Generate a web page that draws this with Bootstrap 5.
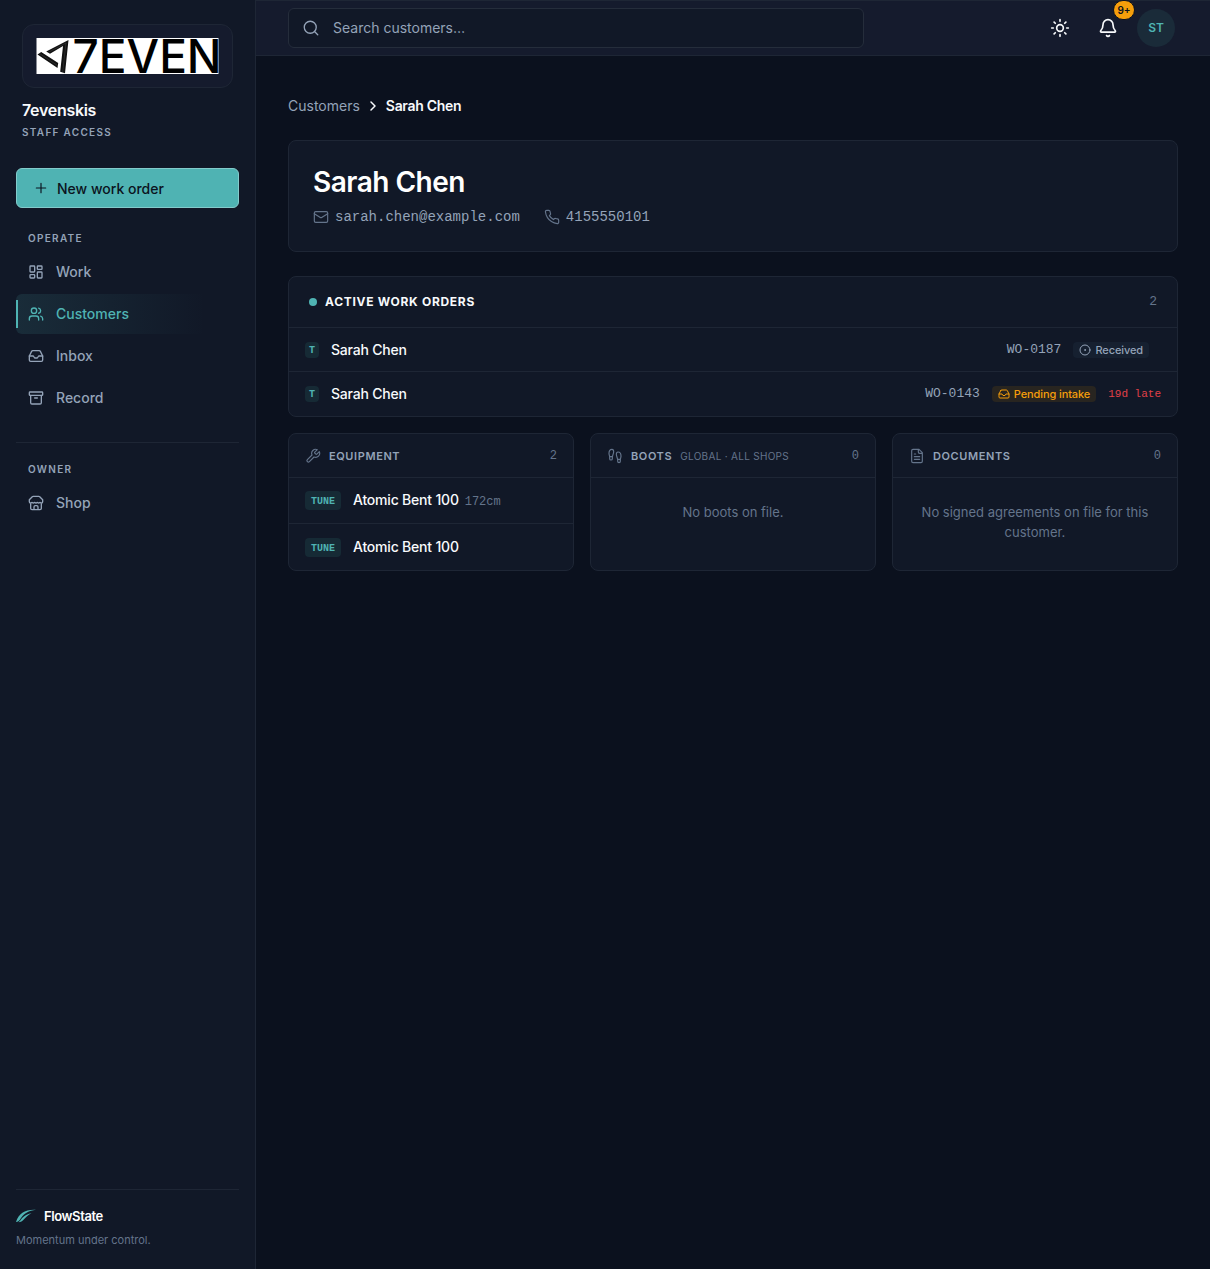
<!DOCTYPE html>
<html lang="en" data-bs-theme="dark">
<head>
<meta charset="utf-8">
<meta name="viewport" content="width=device-width, initial-scale=1">
<title>Sarah Chen · Customers · FlowState</title>
<link href="https://cdn.jsdelivr.net/npm/bootstrap@5.3.0/dist/css/bootstrap.min.css" rel="stylesheet">
<style>
:root{--page:#0b111e;--panel:#111827;--bar:#151b2d;--line:#1e2635;--teal:#4fb3b3;--soft:#94a3b8;--dim:#64748b;--bright:#f8fafc}
body{background:var(--page);color:var(--bright);font:14px/20px Inter,"Liberation Sans",sans-serif}
a{text-decoration:none}
svg{flex:none}
.ico{fill:none;stroke:currentColor;stroke-width:2;stroke-linecap:round;stroke-linejoin:round}
.thin{stroke-width:1.75}
.thick{stroke-width:3}
.mono{font-family:"Liberation Mono",monospace}
.soft{color:var(--soft)}
.dim{color:var(--dim)}
.side{width:256px;background:var(--panel);border-right:1px solid var(--line);padding:24px 16px 19px}
.brand{padding:0 6px;margin-bottom:28px}
.logo-box{background:var(--bar);border:1px solid var(--line);border-radius:12px;padding:13px;margin-bottom:12px;line-height:0}
.brand-name{font-size:16px;font-weight:600;line-height:20px;letter-spacing:-.3px}
.eyebrow{font-size:10px;font-weight:600;line-height:16px;letter-spacing:1.3px;color:var(--soft)}
.btn-new{--bs-btn-color:#0b1420;--bs-btn-bg:var(--teal);--bs-btn-border-color:#83cbcb;--bs-btn-hover-bg:#62c0c0;--bs-btn-hover-color:#0b1420;--bs-btn-hover-border-color:#9bd8d8;height:40px;font-size:14px;font-weight:500;padding:0 16px;border-radius:6px;margin-bottom:22px}
.side-nav{gap:2px}
.side-nav .nav-link{height:40px;padding:0 12px;gap:12px;font-weight:500;color:var(--soft);border-radius:6px;position:relative}
.side-nav .nav-link.active{color:var(--teal);background:linear-gradient(90deg,rgba(79,179,179,.13),rgba(79,179,179,0) 85%)}
.side-nav .nav-link.active::before{content:"";position:absolute;left:0;top:6px;bottom:6px;width:2px;background:var(--teal)}
.side-label{padding:0 12px;margin-bottom:6px}
.side-split{border-top:1px solid var(--line);margin-top:24px;padding-top:18px}
.side-foot{border-top:1px solid var(--line);padding-top:16px}
.foot-name{font-size:13px;font-weight:600;letter-spacing:-.4px;color:#fff}
.tagline{font-size:11px}
.topbar{height:56px;background:var(--bar);border-top:1px solid var(--line);border-bottom:1px solid var(--line);padding:0 34px 0 32px}
.find{width:576px;height:40px;background:var(--panel);border:1px solid #252d3b;border-radius:6px;padding:0 13px;gap:13px;color:var(--soft)}
.find input{background:none;border:0;outline:0;padding:0;font-size:14px;color:var(--bright)}
.find input::placeholder{color:var(--soft);opacity:1}
.bar-btn{width:40px;height:40px;padding:0;color:var(--bright)}
.alert-count{position:absolute;top:-8px;right:-7px;min-width:22px;height:20px;border:1px solid var(--page);border-radius:10px;background:#f59e0b;color:#0b111e;font-size:10px;font-weight:600;line-height:18px}
.avatar{width:40px;height:40px;background:#1a2b39;background-clip:padding-box;border:1px solid transparent;color:var(--teal);font-size:12px;font-weight:600}
.page{padding:40px 32px 32px}
.crumbs{margin-bottom:24px;gap:7px}
.crumbs .here{font-weight:600;letter-spacing:-.3px}
.panel{background:var(--panel);border:1px solid var(--line);border-radius:8px}
.person{padding:24px;margin-bottom:24px}
.person h1{font-size:28px;line-height:34px;font-weight:600;letter-spacing:-.5px;margin-bottom:8px}
.contact{font-size:14px;gap:6px}
.panel-head{padding:0 16px;height:44px;border-bottom:1px solid var(--line)}
.panel-head.tall{padding:0 20px;height:51px}
.panel-head h2{margin:0;font-size:11px;line-height:16px;font-weight:600;letter-spacing:.6px;color:var(--soft)}
.panel-head.tall h2{font-size:12px;font-weight:700;letter-spacing:.7px;color:var(--bright)}
.panel-head .mono{font-size:12px;color:var(--dim)}
.panel-head.tall .mono{font-size:13px}
.panel-head .scope{font-size:10px;letter-spacing:.3px;color:var(--dim)}
.dot{width:8px;height:8px;border-radius:50%;background:var(--teal)}
.rows{--bs-list-group-bg:transparent;--bs-list-group-border-color:var(--line);--bs-list-group-color:var(--bright);--bs-list-group-item-padding-x:16px;--bs-list-group-item-padding-y:0}
.rows .list-group-item{gap:12px;height:44px;font-weight:500;letter-spacing:-.2px}
.rows.gear .list-group-item{height:46px}
.order-no{font-size:13px;font-weight:400;letter-spacing:0;color:var(--soft)}
.tag{background:#162a35;color:var(--teal);font:700 10px/14px "Liberation Mono",monospace;letter-spacing:0;border-radius:4px;padding:2px 4px 0}
.tag.wide{padding:4px 6px 1px}
.state{gap:4px;height:16px;border-radius:4px;padding:0 6px;background:#162030;color:var(--soft);font-size:11px;line-height:16px;font-weight:500;letter-spacing:-.1px}
.state.last{margin-right:12px}
.state.wait{background:#282520;color:#f59e0b}
.late{font-size:11px;font-weight:400;letter-spacing:0;color:#e04048}
.size{font-size:12px;font-weight:400;letter-spacing:0;color:var(--dim);margin-left:6px}
.none{font-size:13px;padding:24px 16px 28px}
</style>
</head>
<body>
<div class="d-flex min-vh-100">
  <aside class="side d-flex flex-column flex-shrink-0 vh-100 sticky-top">
    <div class="brand">
      <div class="logo-box">
        <svg class="w-100 overflow-visible" height="36" viewBox="0 0 182 36" role="img" aria-label="7EVEN">
          <rect width="182" height="36" fill="#fff"/>
          <path d="M9.700 13.500 32 2 28.500 35.300 23.700 33.700 26.500 8 13.500 15.700zM4.700 14 21.700 25 21 30 1 16.500z" fill="#111"/>
          <path d="M11.500 14.500 29.500 5 26.200 34M3 15.500 21 27.500" fill="none" stroke="#444" stroke-width=".5"/>
          <text x="36" y="35" font-family="Inter, sans-serif" font-size="46" font-weight="500" fill="#000">7EVEN</text>
        </svg>
      </div>
      <div class="brand-name">7evenskis</div>
      <div class="eyebrow mt-1">STAFF ACCESS</div>
    </div>
    <button type="button" class="btn btn-new d-flex align-items-center gap-2 w-100">
      <svg class="ico thin" width="16" height="16" viewBox="0 0 24 24"><path d="M5 12h14M12 5v14"/></svg>New work order
    </button>
    <div class="eyebrow side-label">OPERATE</div>
    <nav class="nav flex-column side-nav" aria-label="Operate">
      <a href="#" class="nav-link d-flex align-items-center"><svg class="ico" width="16" height="16" viewBox="0 0 24 24"><rect x="3" y="3" width="7" height="9" rx="1"/><rect x="14" y="3" width="7" height="5" rx="1"/><rect x="14" y="12" width="7" height="9" rx="1"/><rect x="3" y="16" width="7" height="5" rx="1"/></svg>Work</a>
      <a href="#" class="nav-link active d-flex align-items-center" aria-current="page"><svg class="ico" width="16" height="16" viewBox="0 0 24 24"><path d="M16 21v-2a4 4 0 0 0-4-4H6a4 4 0 0 0-4 4v2"/><circle cx="9" cy="7" r="4"/><path d="M22 21v-2a4 4 0 0 0-3-3.870M16 3.130a4 4 0 0 1 0 7.750"/></svg>Customers</a>
      <a href="#" class="nav-link d-flex align-items-center"><svg class="ico" width="16" height="16" viewBox="0 0 24 24"><path d="M22 12h-6l-2 3h-4l-2-3H2"/><path d="M5.450 5.110 2 12v6a2 2 0 0 0 2 2h16a2 2 0 0 0 2-2v-6l-3.450-6.890A2 2 0 0 0 16.760 4H7.240a2 2 0 0 0-1.790 1.110z"/></svg>Inbox</a>
      <a href="#" class="nav-link d-flex align-items-center"><svg class="ico" width="16" height="16" viewBox="0 0 24 24"><rect x="2" y="3" width="20" height="5" rx="1"/><path d="M4 8v11a2 2 0 0 0 2 2h12a2 2 0 0 0 2-2V8M10 12h4"/></svg>Record</a>
    </nav>
    <div class="side-split">
      <div class="eyebrow side-label">OWNER</div>
      <nav class="nav flex-column side-nav" aria-label="Owner">
        <a href="#" class="nav-link d-flex align-items-center"><svg class="ico" width="16" height="16" viewBox="0 0 24 24"><path d="m2 7 4.410-4.410A2 2 0 0 1 7.830 2h8.340a2 2 0 0 1 1.420.590L22 7M4 12v8a2 2 0 0 0 2 2h12a2 2 0 0 0 2-2v-8M15 22v-4a2 2 0 0 0-2-2h-2a2 2 0 0 0-2 2v4M2 7v3a2 2 0 0 0 2 2 2.700 2.700 0 0 0 1.590-.630.700.700 0 0 1 .820 0A2.700 2.700 0 0 0 8 12a2.700 2.700 0 0 0 1.590-.630.700.700 0 0 1 .820 0A2.700 2.700 0 0 0 12 12a2.700 2.700 0 0 0 1.590-.630.700.700 0 0 1 .820 0A2.700 2.700 0 0 0 16 12a2.700 2.700 0 0 0 1.590-.630.700.700 0 0 1 .820 0A2.700 2.700 0 0 0 20 12a2 2 0 0 0 2-2V7"/></svg>Shop</a>
      </nav>
    </div>
    <div class="side-foot mt-auto">
      <div class="d-flex align-items-center gap-2 mb-1">
        <svg width="20" height="14" viewBox="0 0 20 14" fill="#4fb3b3"><path d="M0 13C3 4 9 .300 20 .800 12.500 2 8.500 4 5 9 3.500 11.500 2 13 0 13z"/><path d="M2.500 13.300C5.500 11 6.500 6 15.500 4 11.500 6.500 10 8 8 10.300 6.500 12 4.500 13.300 2.500 13.300z"/></svg>
        <span class="foot-name">FlowState</span>
      </div>
      <div class="dim tagline">Momentum under control.</div>
    </div>
  </aside>

  <div class="flex-grow-1 overflow-hidden">
    <header class="topbar d-flex align-items-center justify-content-between">
      <label class="find d-flex align-items-center">
        <svg class="ico thin" width="18" height="18" viewBox="0 0 24 24"><circle cx="11" cy="11" r="8"/><path d="m21 21-4.300-4.300"/></svg>
        <input type="search" class="flex-grow-1" placeholder="Search customers…" aria-label="Search customers">
      </label>
      <div class="d-flex align-items-center gap-2">
        <button type="button" class="btn bar-btn border-0 d-flex align-items-center justify-content-center" aria-label="Theme"><svg class="ico" width="20" height="20" viewBox="0 0 24 24"><circle cx="12" cy="12" r="4"/><path d="M12 2v2M12 20v2M4.930 4.930l1.410 1.410M17.660 17.660l1.410 1.410M2 12h2M20 12h2M6.340 17.660l-1.410 1.410M19.070 4.930l-1.410 1.410"/></svg></button>
        <button type="button" class="btn bar-btn border-0 position-relative d-flex align-items-center justify-content-center" aria-label="Notifications"><svg class="ico" width="20" height="20" viewBox="0 0 24 24"><path d="M10.270 21a2 2 0 0 0 3.460 0M3.260 15.330A1 1 0 0 0 4 17h16a1 1 0 0 0 .740-1.670C19.410 13.960 18 12.500 18 8A6 6 0 0 0 6 8c0 4.500-1.410 5.960-2.740 7.330z"/></svg><span class="alert-count">9+</span></button>
        <button type="button" class="btn avatar rounded-circle p-0">ST</button>
      </div>
    </header>

    <main class="page">
      <nav class="crumbs d-flex align-items-center" aria-label="Breadcrumb">
        <a href="#" class="soft">Customers</a>
        <svg class="ico thick" width="12" height="12" viewBox="0 0 24 24"><path d="m8 20 8-8-8-8"/></svg>
        <span class="here">Sarah Chen</span>
      </nav>

      <section class="panel person">
        <h1>Sarah Chen</h1>
        <div class="d-flex flex-wrap gap-4">
          <a href="#" class="contact mono soft d-flex align-items-center"><svg class="ico thin dim" width="16" height="16" viewBox="0 0 24 24"><rect x="2" y="4" width="20" height="16" rx="2"/><path d="m22 7-8.970 5.700a2 2 0 0 1-2.060 0L2 7"/></svg>sarah.chen@example.com</a>
          <a href="#" class="contact mono soft d-flex align-items-center"><svg class="ico thin dim" width="16" height="16" viewBox="0 0 24 24"><path d="M22 16.920v3a2 2 0 0 1-2.180 2 19.800 19.800 0 0 1-8.630-3.070 19.500 19.500 0 0 1-6-6 19.800 19.800 0 0 1-3.070-8.670A2 2 0 0 1 4.110 2h3a2 2 0 0 1 2 1.720 12.800 12.800 0 0 0 .700 2.810 2 2 0 0 1-.450 2.110L8.090 9.910a16 16 0 0 0 6 6l1.270-1.270a2 2 0 0 1 2.110-.450 12.800 12.800 0 0 0 2.810.700A2 2 0 0 1 22 16.920z"/></svg>4155550101</a>
        </div>
      </section>

      <section class="panel mb-3">
        <div class="panel-head tall d-flex align-items-center gap-2">
          <span class="dot"></span><h2>ACTIVE WORK ORDERS</h2><span class="mono ms-auto">2</span>
        </div>
        <div class="list-group list-group-flush rows">
          <a href="#" class="list-group-item d-flex align-items-center"><span class="tag">T</span><span class="me-auto">Sarah Chen</span><span class="mono order-no">WO-0187</span><span class="state last d-flex align-items-center"><svg class="ico" width="12" height="12" viewBox="0 0 24 24"><circle cx="12" cy="12" r="10"/><circle cx="12" cy="12" r="1"/></svg>Received</span></a>
          <a href="#" class="list-group-item d-flex align-items-center"><span class="tag">T</span><span class="me-auto">Sarah Chen</span><span class="mono order-no">WO-0143</span><span class="state wait d-flex align-items-center"><svg class="ico" width="12" height="12" viewBox="0 0 24 24"><path d="M22 12h-6l-2 3h-4l-2-3H2"/><path d="M5.450 5.110 2 12v6a2 2 0 0 0 2 2h16a2 2 0 0 0 2-2v-6l-3.450-6.890A2 2 0 0 0 16.760 4H7.240a2 2 0 0 0-1.790 1.110z"/></svg>Pending intake</span><span class="mono late">19d late</span></a>
        </div>
      </section>

      <div class="row row-cols-1 row-cols-md-3 g-3">
        <div class="col">
          <section class="panel h-100">
            <div class="panel-head d-flex align-items-center gap-2"><svg class="ico thin dim" width="16" height="16" viewBox="0 0 24 24"><path d="M14.700 6.300a1 1 0 0 0 0 1.400l1.600 1.600a1 1 0 0 0 1.400 0l3.770-3.770a6 6 0 0 1-7.940 7.940l-6.910 6.910a2.120 2.120 0 0 1-3-3l6.910-6.910a6 6 0 0 1 7.940-7.940l-3.760 3.760z"/></svg><h2>EQUIPMENT</h2><span class="mono ms-auto">2</span></div>
            <ul class="list-group list-group-flush rows gear">
              <li class="list-group-item d-flex align-items-center"><span class="tag wide">TUNE</span><span>Atomic Bent 100<span class="mono size">172cm</span></span></li>
              <li class="list-group-item d-flex align-items-center"><span class="tag wide">TUNE</span><span>Atomic Bent 100</span></li>
            </ul>
          </section>
        </div>
        <div class="col">
          <section class="panel h-100">
            <div class="panel-head d-flex align-items-center gap-2"><svg class="ico thin dim" width="16" height="16" viewBox="0 0 24 24"><path d="M4 16v-2.380C4 11.500 2.970 10.500 3 8c.030-2.720 1.490-6 4.500-6C9.370 2 10 3.800 10 5.500c0 3.110-2 5.660-2 8.680V16a2 2 0 1 1-4 0zM20 20v-2.380c0-2.120 1.030-3.120 1-5.620-.030-2.720-1.490-6-4.500-6C14.630 6 14 7.800 14 9.500c0 3.110 2 5.660 2 8.680V20a2 2 0 1 0 4 0zM16 17h4M4 13h4"/></svg><h2>BOOTS</h2><span class="scope">GLOBAL · ALL SHOPS</span><span class="mono ms-auto">0</span></div>
            <p class="none dim text-center mb-0">No boots on file.</p>
          </section>
        </div>
        <div class="col">
          <section class="panel h-100">
            <div class="panel-head d-flex align-items-center gap-2"><svg class="ico thin dim" width="16" height="16" viewBox="0 0 24 24"><path d="M15 2H6a2 2 0 0 0-2 2v16a2 2 0 0 0 2 2h12a2 2 0 0 0 2-2V7zM14 2v4a2 2 0 0 0 2 2h4M10 9H8M16 13H8M16 17H8"/></svg><h2>DOCUMENTS</h2><span class="mono ms-auto">0</span></div>
            <p class="none dim text-center mb-0">No signed agreements on file for this customer.</p>
          </section>
        </div>
      </div>
    </main>
  </div>
</div>
<script src="https://cdn.jsdelivr.net/npm/bootstrap@5.3.0/dist/js/bootstrap.bundle.min.js"></script>
</body>
</html>
